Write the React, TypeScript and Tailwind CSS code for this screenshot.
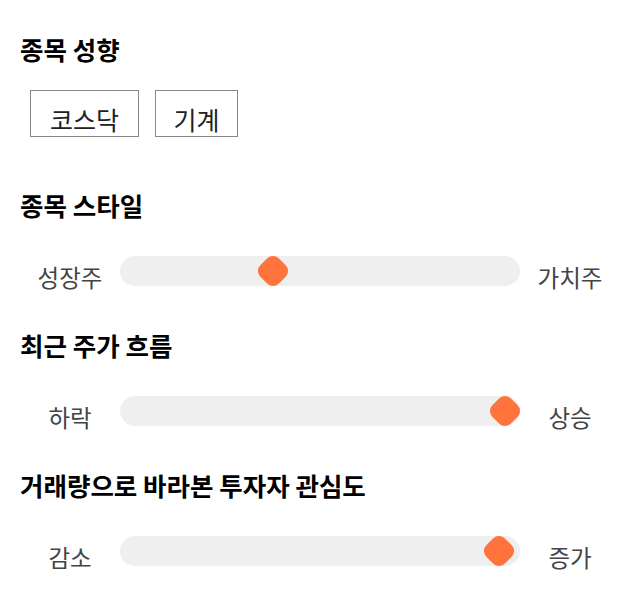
import React from "react";

const font = { fontFamily: '"Noto Sans CJK KR", "Noto Sans", sans-serif' };

function Slider({ left, right, pos }: { left: string; right: string; pos: number }) {
  return (
    <div className="flex items-start h-[30px]">
      <div className="w-[100px] text-center text-[23.5px] leading-[30px] mt-[6px] text-[#444]">{left}</div>
      <div className="relative flex-1 h-[30px] bg-[#efefef] rounded-[15px]">
        <div
          className="absolute top-1/2 w-[26px] h-[26px] bg-[#ff743d] rounded-[8px]"
          style={{ left: `${pos}px`, transform: "translate(-50%, -50%) rotate(45deg)" }}
        />
      </div>
      <div className="w-[100px] text-center text-[23.5px] leading-[30px] mt-[6px] text-[#444]">{right}</div>
    </div>
  );
}

export default function App() {
  return (
    <div className="w-[640px] h-[606px] bg-white px-5 pt-[31px] text-black" style={font}>
      <h2 className="text-[25.5px] font-bold leading-[36px]">종목 성향</h2>
      <div className="flex gap-4 ml-[10px] mt-[23px]">
        <div className="border border-[#888] w-[109px] h-[47px] pt-[10px] flex items-center justify-center text-[25px] leading-[30px] text-[#222]">코스닥</div>
        <div className="border border-[#888] w-[83px] h-[47px] pt-[10px] flex items-center justify-center text-[25px] leading-[30px] text-[#222]">기계</div>
      </div>
      <h2 className="text-[25.5px] font-bold leading-[36px] mt-[50px]">종목 스타일</h2>
      <div className="mt-[33px]">
        <Slider left="성장주" right="가치주" pos={153} />
      </div>
      <h2 className="text-[25.5px] font-bold leading-[36px] mt-[41px]">최근 주가 흐름</h2>
      <div className="mt-[33px]">
        <Slider left="하락" right="상승" pos={385} />
      </div>
      <h2 className="text-[25.5px] font-bold leading-[36px] mt-[41px]">거래량으로 바라본 투자자 관심도</h2>
      <div className="mt-[33px]">
        <Slider left="감소" right="증가" pos={379} />
      </div>
    </div>
  );
}
